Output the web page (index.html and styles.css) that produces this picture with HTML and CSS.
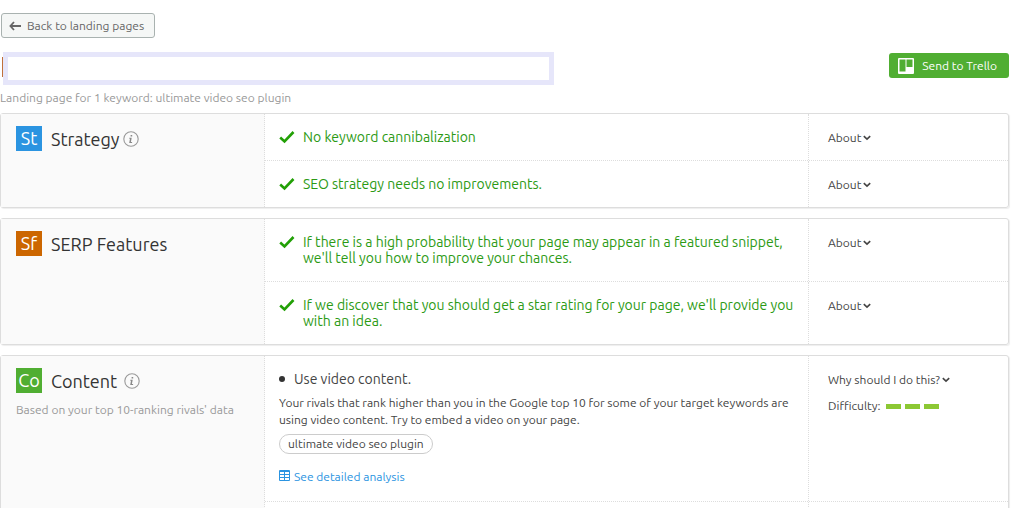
FILE: index.html
```html
<!DOCTYPE html>
<html lang="en">
<head>
<meta charset="utf-8">
<meta name="viewport" content="width=device-width, initial-scale=1">
<title>Landing page ideas</title>
<link rel="stylesheet" href="styles.css">
</head>
<body>
<svg class="defs" aria-hidden="true">
  <symbol id="check" viewBox="0 0 16 14"><path d="M1.2 7.5 5.5 11.5 14.5 2" fill="none" stroke="#22a006" stroke-width="2.6"/></symbol>
  <symbol id="chevron" viewBox="0 0 8 6"><path d="M.8 1.2 4 4.2 7.2 1.2" fill="none" stroke="#444" stroke-width="1.6"/></symbol>
  <symbol id="info" viewBox="0 0 16 16"><circle cx="8" cy="8" r="7.2" fill="none" stroke="#999" stroke-width="1.1"/><path d="M7.6 4h1.6v1.5H7.6zM6.4 6.8h2.3l-.8 4.3h1.2v.9H6.2l.8-4.3h-.8z" fill="#888"/></symbol>
</svg>
<main class="page">
  <button class="back" type="button">
    <svg width="12" height="10" viewBox="0 0 12 10" aria-hidden="true"><path d="M5 1 1.4 5 5 9M1.4 5H12" fill="none" stroke="#666" stroke-width="1.8"/></svg>
    Back to landing pages
  </button>

  <div class="heading">
    <input class="url" type="text" aria-label="Landing page address">
    <button class="trello" type="button">
      <svg width="16" height="16" viewBox="0 0 16 16" aria-hidden="true"><path d="M1 0h14q1 0 1 1v14q0 1-1 1H1q-1 0-1-1V1q0-1 1-1zM1.5 1.5v12h6v-12zM8.5 1.5V9h6V1.5z" fill="#fff" fill-rule="evenodd"/></svg>
      Send to Trello
    </button>
  </div>
  <p class="keywords">Landing page for 1 keyword: ultimate video seo plugin</p>

  <section class="card">
    <header class="side">
      <h2 class="title"><span class="badge badge-blue">St</span>Strategy<svg class="info" role="img" aria-label="Info"><use href="#info"/></svg></h2>
    </header>
    <div class="rows">
      <div class="row">
        <p class="done"><svg class="check" aria-hidden="true"><use href="#check"/></svg>No keyword cannibalization</p>
        <div class="more"><button class="toggle" type="button">About<svg class="chevron" aria-hidden="true"><use href="#chevron"/></svg></button></div>
      </div>
      <div class="row">
        <p class="done"><svg class="check" aria-hidden="true"><use href="#check"/></svg>SEO strategy needs no improvements.</p>
        <div class="more"><button class="toggle" type="button">About<svg class="chevron" aria-hidden="true"><use href="#chevron"/></svg></button></div>
      </div>
    </div>
  </section>

  <section class="card">
    <header class="side">
      <h2 class="title"><span class="badge badge-orange">Sf</span>SERP Features</h2>
    </header>
    <div class="rows">
      <div class="row">
        <p class="done"><svg class="check" aria-hidden="true"><use href="#check"/></svg>If there is a high probability that your page may appear in a featured snippet, we'll tell you how to improve your chances.</p>
        <div class="more"><button class="toggle" type="button">About<svg class="chevron" aria-hidden="true"><use href="#chevron"/></svg></button></div>
      </div>
      <div class="row">
        <p class="done"><svg class="check" aria-hidden="true"><use href="#check"/></svg>If we discover that you should get a star rating for your page, we'll provide you with an idea.</p>
        <div class="more"><button class="toggle" type="button">About<svg class="chevron" aria-hidden="true"><use href="#chevron"/></svg></button></div>
      </div>
    </div>
  </section>

  <section class="card">
    <header class="side">
      <h2 class="title"><span class="badge badge-green">Co</span>Content<svg class="info info-wide" role="img" aria-label="Info"><use href="#info"/></svg></h2>
      <p class="note">Based on your top 10-ranking rivals' data</p>
    </header>
    <div class="rows">
      <div class="row">
        <div class="idea">
          <h3 class="idea-title">Use video content.</h3>
          <p class="idea-text">Your rivals that rank higher than you in the Google top 10 for some of your target keywords are using video content. Try to embed a video on your page.</p>
          <span class="tag">ultimate video seo plugin</span>
          <a class="analysis" href="#analysis"><svg class="table-icon" viewBox="0 0 11 11" aria-hidden="true"><path d="M.5.5h10v10H.5zM.5 1.5h10M.5 4.5h10M.5 7.5h10M5.5 1v10" fill="none" stroke="#2b94e1"/></svg>See detailed analysis</a>
        </div>
        <div class="more">
          <button class="toggle" type="button">Why should I do this?<svg class="chevron" aria-hidden="true"><use href="#chevron"/></svg></button>
          <p class="difficulty">Difficulty: <span class="bars"><i></i><i></i><i></i></span></p>
        </div>
      </div>
      <div class="row">
        <div class="idea"></div>
        <div class="more"></div>
      </div>
    </div>
  </section>
</main>
</body>
</html>
```
FILE: styles.css
```css
* { box-sizing: border-box; }
html { overflow: hidden; }
body { margin: 0; background: #fff; color: #444; font: 12px/16px Ubuntu, "Noto Sans", sans-serif; }
h2, h3, p { margin: 0; font-weight: 400; }
button, input { font: inherit; }
.defs { display: none; }
.page { padding: 13px 15px 0 0; }

.back { display: flex; align-items: center; gap: 6px; height: 25px; margin-left: 1px; padding: 0 10px 0 7px; color: #666; background: #f5f7f6; border: 1px solid #a9b2b0; border-radius: 3px; }

.heading { display: flex; align-items: flex-start; margin-top: 14px; padding-left: 2px; }
.heading::before { content: ""; width: 1px; height: 20px; margin-top: 5px; background: #c0703a; }
.url { width: calc(55% - 3px); height: 33px; padding: 0 8px; background: #fff; border: 5px solid #e6e6fa; outline: 0; }
.trello { display: flex; align-items: center; gap: 8px; height: 25px; margin: 1px 0 0 auto; padding: 0 12px 0 9px; color: #fff; background: #50ae32; border: 0; border-radius: 3px; }
.keywords { margin: 5px 0 7px; color: #999; }

.card { display: grid; grid-template-columns: 264px 1fr; margin-bottom: 10px; border: 1px solid #ddd; border-radius: 3px; box-shadow: 1px 1px 1px #eee; }
.side { padding: 12px 15px; background: #fafafa; border-right: 1px dotted #ddd; }
.title { display: flex; align-items: center; color: #333; font-size: 18px; line-height: 24px; }
.badge { width: 26px; height: 25px; margin-right: 9px; color: #fff; line-height: 24px; text-align: center; }
.badge-blue { background: #2b94e1; }
.badge-orange { background: #cc6600; }
.badge-green { background: #50ae32; }
.info { width: 16px; height: 16px; margin-left: 3px; }
.info-wide { margin-left: 7px; }
.note { margin-top: 9px; color: #999; }

.rows { min-width: 0; }
.row { display: grid; grid-template-columns: 1fr 200px; }
.row + .row { border-top: 1px dotted #ddd; }
.done { display: flex; align-items: flex-start; gap: 8px; padding: 15px 12px 15px 14px; color: #2c9a14; font-size: 14px; line-height: 16px; }
.check { flex: none; width: 16px; height: 14px; margin-top: 1px; }
.more { padding: 16px 16px 14px 19px; border-left: 1px dotted #ddd; }
.toggle { display: flex; align-items: center; gap: 2px; padding: 0; color: #444; background: none; border: 0; }
.chevron { width: 8px; height: 6px; }

.idea { padding: 15px 14px 16px; }
.idea-title { display: flex; align-items: center; gap: 9px; font-size: 14px; line-height: 16px; }
.idea-title::before { content: ""; width: 6px; height: 6px; background: #333; border-radius: 50%; }
.idea-text { margin: 7px 0 6px; line-height: 17px; }
.tag { display: block; width: fit-content; padding: 1px 8px; border: 1px solid #ccc; border-radius: 10px; }
.analysis { display: flex; gap: 4px; margin-top: 15px; color: #2b94e1; text-decoration: none; }
.table-icon { width: 11px; height: 11px; margin-top: 1px; }
.difficulty { display: flex; align-items: center; gap: 5px; margin-top: 10px; }
.bars { display: flex; gap: 4px; }
.bars i { width: 15px; height: 5px; background: #8cc834; }
```
